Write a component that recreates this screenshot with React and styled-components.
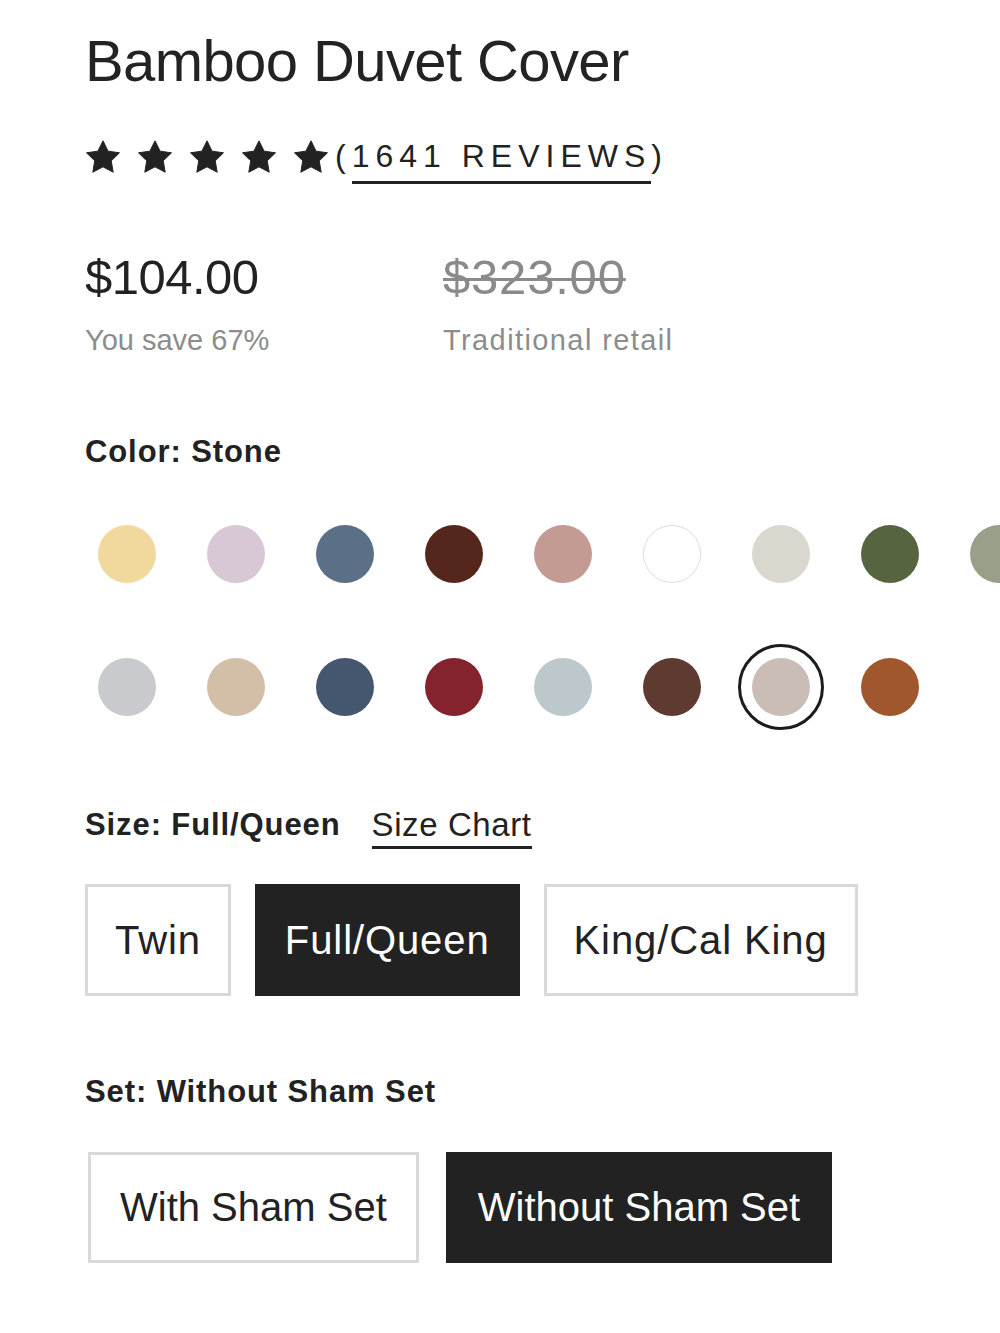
import React from "react";
import styled, { createGlobalStyle } from "styled-components";

const GlobalStyle = createGlobalStyle`
    html, body {
        margin: 0;
        padding: 0;
        background: #ffffff;
        overflow-x: hidden;
    }
    body {
        font-family: "Liberation Sans", Arial, sans-serif;
        color: #222222;
    }
`;

const StyledPage = styled.div`
    width: 1000px;
    padding: 32px 0 60px 85px;
    box-sizing: border-box;
    overflow: hidden;
`;

const StyledTitle = styled.h1`
    margin: 0;
    font-size: 58px;
    line-height: 58px;
    font-weight: 400;
    color: #232323;
    letter-spacing: -0.6px;
`;

const StyledRatingRow = styled.div`
    display: flex;
    align-items: flex-start;
    margin-top: 48px;
`;

const StyledStars = styled.div`
    display: flex;
    gap: 16px;
    margin-top: 2px;
`;

const StyledReviews = styled.div`
    margin-left: 6px;
    font-size: 32px;
    line-height: 36px;
    letter-spacing: 6px;
    color: #222222;
`;

const StyledReviewLink = styled.span`
    display: inline-block;
    padding-bottom: 7px;
    border-bottom: 3px solid #222222;
`;

const StyledPriceGrid = styled.div`
    display: grid;
    grid-template-columns: 358px auto;
    margin-top: 65px;
`;

const StyledPrice = styled.div`
    font-size: 49px;
    line-height: 56px;
    letter-spacing: ${(props) => (props.$old ? "0.8px" : "-0.5px")};
    color: ${(props) => (props.$old ? "#8a8a8a" : "#222222")};
    text-decoration: ${(props) => (props.$old ? "line-through" : "none")};
    text-decoration-thickness: 3px;
`;

const StyledPriceNote = styled.div`
    margin-top: 18px;
    font-size: 29px;
    line-height: 34px;
    color: #8c8c8c;
    letter-spacing: ${(props) => (props.$wide ? "1.4px" : "0")};
`;

const StyledLabel = styled.div`
    margin-top: ${(props) => props.$top}px;
    font-size: 31px;
    line-height: 36px;
    font-weight: 700;
    letter-spacing: 0.9px;
    color: #222222;
`;

const StyledSwatchGrid = styled.div`
    display: grid;
    grid-template-columns: repeat(9, 86px);
    column-gap: 23px;
    row-gap: 47px;
    margin-top: 41px;
    margin-left: -1px;
`;

const StyledSwatchSlot = styled.div`
    width: 86px;
    height: 86px;
    box-sizing: border-box;
    border-radius: 50%;
    border: 3px solid ${(props) => (props.$selected ? "#1c1c1c" : "transparent")};
    display: flex;
    align-items: center;
    justify-content: center;
`;

const StyledSwatch = styled.div`
    width: 58px;
    height: 58px;
    box-sizing: border-box;
    border-radius: 50%;
    background: ${(props) => props.$color};
    border: ${(props) => (props.$outlined ? "1.5px solid #dcdcdc" : "none")};
`;

const StyledSizeHeader = styled.div`
    display: flex;
    align-items: flex-start;
    gap: 31px;
    margin-top: 77px;
`;

const StyledSizeChart = styled.span`
    display: inline-block;
    font-size: 33px;
    line-height: 36px;
    letter-spacing: 0.6px;
    padding-bottom: 3px;
    border-bottom: 3px solid #222222;
    color: #222222;
`;

const StyledOptionRow = styled.div`
    display: flex;
    gap: ${(props) => props.$gap}px;
    margin-top: ${(props) => props.$top}px;
    margin-left: ${(props) => props.$left || 0}px;
`;

const StyledOption = styled.button`
    height: ${(props) => props.$height}px;
    padding: 0 ${(props) => props.$pad}px;
    box-sizing: border-box;
    font-family: "Liberation Sans", Arial, sans-serif;
    font-size: 40px;
    letter-spacing: ${(props) => props.$spacing || 0}px;
    background: ${(props) => (props.$active ? "#222222" : "#ffffff")};
    color: ${(props) => (props.$active ? "#ffffff" : "#222222")};
    border: 3px solid ${(props) => (props.$active ? "#222222" : "#d9d9d9")};
    border-radius: 0;
    cursor: pointer;
`;

const Star = () => (
    <svg width="36" height="33" viewBox="1.5 1.5 21 20">
        <polygon
            points="12,2 15.09,8.26 22,9.27 17,14.14 18.18,21.02 12,17.77 5.82,21.02 7,14.14 2,9.27 8.91,8.26"
            fill="#222222"
            stroke="#222222"
            strokeWidth="0.6"
            strokeLinejoin="round"
        />
    </svg>
);

const swatches = [
    { name: "Honey", color: "#f1d89d" },
    { name: "Lilac", color: "#d8c7d4" },
    { name: "Slate Blue", color: "#5b6f87" },
    { name: "Mahogany", color: "#55271c" },
    { name: "Rose", color: "#c39b93" },
    { name: "White", color: "#ffffff", outlined: true },
    { name: "Ivory", color: "#d9d7ce" },
    { name: "Olive", color: "#566540" },
    { name: "Sage", color: "#9a9f8a" },
    { name: "Light Grey", color: "#c9cacd" },
    { name: "Sand", color: "#d3bea8" },
    { name: "Navy", color: "#45566f" },
    { name: "Crimson", color: "#84232d" },
    { name: "Mist", color: "#bcc8cb" },
    { name: "Chocolate", color: "#5e3a31" },
    { name: "Stone", color: "#c9bdb5", selected: true },
    { name: "Rust", color: "#a0572d" },
];

const sizes = [
    { label: "Twin" },
    { label: "Full/Queen", active: true },
    { label: "King/Cal King" },
];

const sets = [{ label: "With Sham Set" }, { label: "Without Sham Set", active: true }];

const App = () => {
    return (
        <StyledPage>
            <GlobalStyle />
            <StyledTitle>Bamboo Duvet Cover</StyledTitle>

            <StyledRatingRow>
                <StyledStars>
                    {[0, 1, 2, 3, 4].map((i) => (
                        <Star key={i} />
                    ))}
                </StyledStars>
                <StyledReviews>
                    (<StyledReviewLink>1641 REVIEWS</StyledReviewLink>)
                </StyledReviews>
            </StyledRatingRow>

            <StyledPriceGrid>
                <div>
                    <StyledPrice>$104.00</StyledPrice>
                    <StyledPriceNote>You save 67%</StyledPriceNote>
                </div>
                <div>
                    <StyledPrice $old>$323.00</StyledPrice>
                    <StyledPriceNote $wide>Traditional retail</StyledPriceNote>
                </div>
            </StyledPriceGrid>

            <StyledLabel $top={77}>Color: Stone</StyledLabel>
            <StyledSwatchGrid>
                {swatches.map((s) => (
                    <StyledSwatchSlot key={s.name} $selected={s.selected} title={s.name}>
                        <StyledSwatch $color={s.color} $outlined={s.outlined} />
                    </StyledSwatchSlot>
                ))}
            </StyledSwatchGrid>

            <StyledSizeHeader>
                <StyledLabel $top={0}>Size: Full/Queen</StyledLabel>
                <StyledSizeChart>Size Chart</StyledSizeChart>
            </StyledSizeHeader>
            <StyledOptionRow $gap={24} $top={35}>
                {sizes.map((s) => (
                    <StyledOption
                        key={s.label}
                        $active={s.active}
                        $height={112}
                        $pad={27}
                        $spacing={0.9}
                    >
                        {s.label}
                    </StyledOption>
                ))}
            </StyledOptionRow>

            <StyledLabel $top={78}>Set: Without Sham Set</StyledLabel>
            <StyledOptionRow $gap={27} $top={42} $left={3}>
                {sets.map((s) => (
                    <StyledOption key={s.label} $active={s.active} $height={111} $pad={29}>
                        {s.label}
                    </StyledOption>
                ))}
            </StyledOptionRow>
        </StyledPage>
    );
};

export default App;
